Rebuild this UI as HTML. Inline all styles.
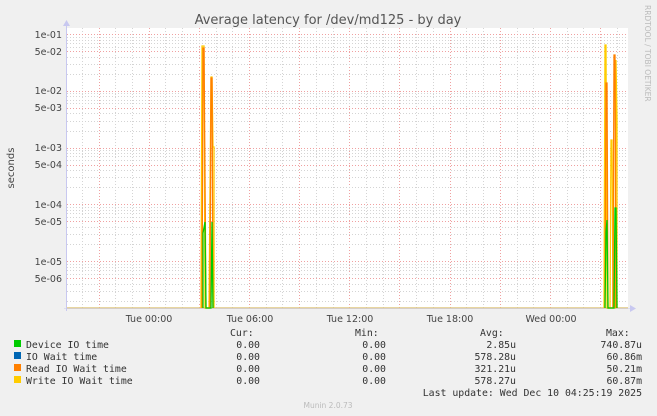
<!DOCTYPE html>
<html><head><meta charset="utf-8"><style>
body{margin:0;width:657px;height:416px;background:#f0f0f0;overflow:hidden}
svg{display:block}
text{font-family:"DejaVu Sans","Liberation Sans",sans-serif}
.m text{font-family:"DejaVu Sans Mono","Liberation Mono",monospace;font-size:9.85px;fill:#333}
</style></head><body>
<svg id="s" width="657" height="416" viewBox="0 0 657 416" xmlns="http://www.w3.org/2000/svg">
<rect x="67" y="28" width="561" height="280" fill="#fff"/>
<g id="g"></g>
<text x="328" y="24" font-size="13" fill="#555" text-anchor="middle">Average latency for /dev/md125 - by day</text>
<g font-size="9.5" fill="#444" text-anchor="end">
<text x="62" y="38">1e-01</text><text x="62" y="55">5e-02</text>
<text x="62" y="94">1e-02</text><text x="62" y="111">5e-03</text>
<text x="62" y="151">1e-03</text><text x="62" y="168">5e-04</text>
<text x="62" y="208">1e-04</text><text x="62" y="225">5e-05</text>
<text x="62" y="265">1e-05</text><text x="62" y="282">5e-06</text>
</g>
<text transform="translate(14,168) rotate(-90)" font-size="10" fill="#444" text-anchor="middle">seconds</text>
<g font-size="9.5" fill="#444" text-anchor="middle">
<text x="149" y="322">Tue 00:00</text><text x="250" y="322">Tue 06:00</text>
<text x="350" y="322">Tue 12:00</text><text x="450" y="322">Tue 18:00</text>
<text x="551" y="322">Wed 00:00</text>
</g>
<text transform="translate(645,5) rotate(90)" font-size="7.5" fill="#bbb">RRDTOOL / TOBI OETIKER</text>
<line x1="67" y1="308" x2="628" y2="308" stroke="#e0c880" stroke-width="1.5"/>
<line x1="66.5" y1="26" x2="66.5" y2="311" stroke="#c8c8f0"/>
<line x1="64" y1="308.5" x2="632" y2="308.5" stroke="#c8c8f0" stroke-width="0.5"/>
<path d="M63 26 L66.5 20 L70 26Z M630 305 L636 308.5 L630 312Z" fill="#c8c8f0"/>
<g fill="none" stroke-width="1.3">
<polyline stroke="#ffcc00" points="201,308 202,46 204,46 205,308 209,308 211,77 212,77 213,147 214,147 214,308"/>
<polyline stroke="#ff7f00" points="202,308 203,48 204,48 206,308 210,308 211,78 212,78 213,308"/>
<polyline stroke="#00cc00" points="203,308 203,233 205,222 206,308 211,308 212,222 213,308"/>
<polyline stroke="#ffcc00" points="604,308 605,45 606,45 607,308 610,308 611,140 612,140 613,308 615,308 616,60 617,120 617,308"/>
<polyline stroke="#ff7f00" points="605,308 606,83 607,83 608,308 613,308 614,55 615,55 616,308"/>
<polyline stroke="#00cc00" points="605,308 606,232 607,220 608,308 614,308 615,208 616,208 617,308"/>
</g>
<g class="m">
<text x="230" y="336">Cur:</text><text x="355" y="336">Min:</text><text x="480" y="336">Avg:</text><text x="606" y="336">Max:</text>
</g>
<rect x="14" y="340" width="7" height="7" fill="#00cc00"/>
<rect x="14" y="352" width="7" height="7" fill="#0066b3"/>
<rect x="14" y="364" width="7" height="7" fill="#ff8000"/>
<rect x="14" y="376" width="7" height="7" fill="#ffcc00"/>
<g class="m">
<text x="26" y="348">Device IO time</text><text x="26" y="360">IO Wait time</text>
<text x="26" y="372">Read IO Wait time</text><text x="26" y="384">Write IO Wait time</text>
</g>
<g class="m" text-anchor="end">
<text x="260" y="348">0.00</text><text x="386" y="348">0.00</text><text x="516" y="348">2.85u</text><text x="642" y="348">740.87u</text>
<text x="260" y="360">0.00</text><text x="386" y="360">0.00</text><text x="516" y="360">578.28u</text><text x="642" y="360">60.86m</text>
<text x="260" y="372">0.00</text><text x="386" y="372">0.00</text><text x="516" y="372">321.21u</text><text x="642" y="372">50.21m</text>
<text x="260" y="384">0.00</text><text x="386" y="384">0.00</text><text x="516" y="384">578.27u</text><text x="642" y="384">60.87m</text>
<text x="642" y="396">Last update: Wed Dec 10 04:25:19 2025</text>
</g>
<text x="328" y="408" font-size="7.5" fill="#bbb" text-anchor="middle">Munin 2.0.73</text>
</svg>
<script>
var g=document.getElementById('g'),o='';
function L(x1,y1,x2,y2,c){o+='<line x1="'+x1+'" y1="'+y1+'" x2="'+x2+'" y2="'+y2+'" stroke="'+c+'" stroke-width="1" stroke-dasharray="1,2"/>';}
for(var i=0;i<34;i++){var x=81.8+i*16.72;if(x>627)break;var r=((i-1)%3==0);L(Math.round(x)+.5,28,Math.round(x)+.5,308,r?'#f0a0a0':'#d4d4d4');}
var offs=[[2.6,0],[5.5,0],[8.8,0],[12.6,0],[17.1,1],[22.6,0],[29.7,0],[39.7,0]];
for(var k=0;k<5;k++){var T=34+56.8*k;L(67,Math.round(T)+.5,628,Math.round(T)+.5,'#f0a0a0');
offs.forEach(function(a){var y=T+a[0];if(y<308)L(67,Math.round(y)+.5,628,Math.round(y)+.5,a[1]?'#f0a0a0':'#d4d4d4');});}
g.innerHTML=o;
</script>
</body></html>
